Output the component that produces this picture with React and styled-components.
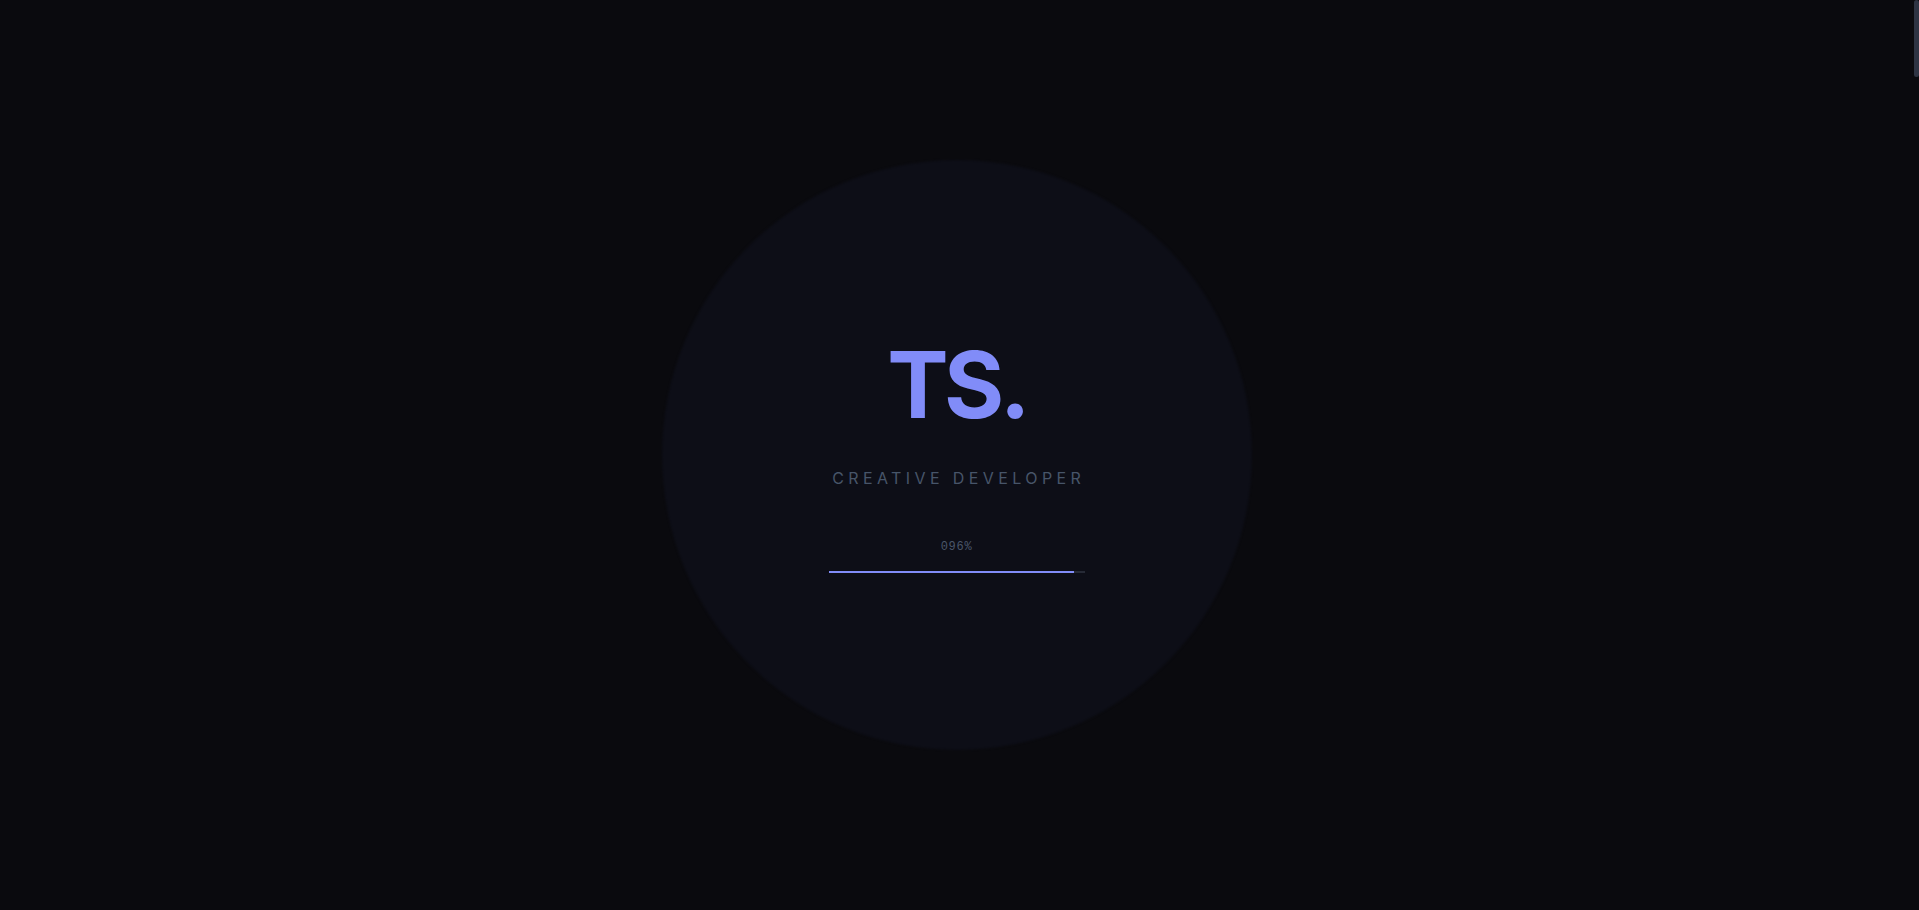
import React from 'react';
import styled, { createGlobalStyle } from 'styled-components';

const GlobalStyle = createGlobalStyle`
  html, body {
    margin: 0;
    padding: 0;
    background: #0a0a0e;
  }
  body {
    font-family: Inter, "Noto Sans", "Liberation Sans", sans-serif;
    -webkit-font-smoothing: antialiased;
  }
`;

const Page = styled.main`
  height: 910px;
  background: #0a0a0e;
`;

const Loader = styled.div`
  position: fixed;
  top: 0;
  left: 0;
  bottom: 0;
  right: 6px;
  z-index: 50;
  display: flex;
  align-items: center;
  justify-content: center;
  background: #0a0a0e;
  overflow: hidden;
`;

// thin scroll indicator on the right edge
const ScrollRail = styled.div`
  position: fixed;
  top: 0;
  right: 0;
  bottom: 0;
  width: 6px;
  z-index: 60;
  background: #0a0a0e;
`;

const ScrollThumb = styled.div`
  margin-left: 1px;
  width: 5px;
  height: 77px;
  border-radius: 3px;
  background: #2e3443;
`;

const Glow = styled.div`
  position: absolute;
  top: 50%;
  left: 50%;
  width: 590px;
  height: 590px;
  transform: translate(-50%, -50%);
  border-radius: 50%;
  background: #0d0e17;
  filter: blur(1px);
`;

const Content = styled.div`
  position: relative;
  display: flex;
  flex-direction: column;
  align-items: center;
`;

const Logo = styled.h1`
  margin: 0;
  font-size: 92px;
  line-height: 96px;
  font-weight: 700;
  letter-spacing: -0.05em;
  color: #818cf8;
`;

const Tagline = styled.p`
  margin: 33px 0 0;
  font-size: 16px;
  line-height: 24px;
  letter-spacing: 0.275em;
  margin-right: -0.275em;
  text-transform: uppercase;
  color: #475569;
`;

const Percent = styled.span`
  margin-top: 49px;
  font-family: "Liberation Mono", "DejaVu Sans Mono", monospace;
  font-size: 12px;
  line-height: 16px;
  letter-spacing: 0.06em;
  color: #4a566a;
`;

const Track = styled.div`
  margin-top: 16px;
  width: 256px;
  height: 2px;
  background: #262a36;
  overflow: hidden;
`;

const Fill = styled.div`
  height: 100%;
  background: #818cf8;
`;

export default function App() {
  const progress = 96;

  return (
    <>
      <GlobalStyle />
      <Page />
      <Loader>
        <Glow />
        <Content>
          <Logo>TS.</Logo>
          <Tagline>Creative Developer</Tagline>
          <Percent>{String(progress).padStart(3, '0')}%</Percent>
          <Track>
            <Fill style={{ width: `${progress}%` }} />
          </Track>
        </Content>
      </Loader>
      <ScrollRail>
        <ScrollThumb />
      </ScrollRail>
    </>
  );
}
